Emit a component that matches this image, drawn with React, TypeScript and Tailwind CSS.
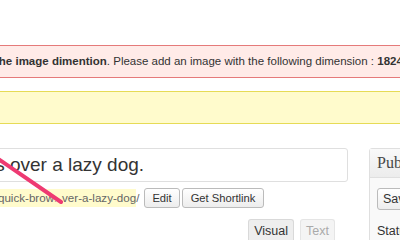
import React from "react";

export default function App() {
  return (
    <div className="relative w-[400px] h-[240px] overflow-hidden bg-white text-[#333] font-['Liberation_Sans',Arial,sans-serif]">
      <div className="pt-[45px]">
        {/* error notice */}
        <div className="-mx-[20px] h-[33px] border border-[#e57a7a] bg-[#ffebe8] flex items-center whitespace-nowrap text-[11.5px] text-[#333]">
          <span className="ml-[14px]">
            <b>the image dimention</b>. Please add an image with the following dimension : <b>1824 x 1200</b>
          </span>
        </div>

        {/* update notice */}
        <div className="-mx-[20px] mt-[13px] h-[33px] border border-[#e6db55] bg-[#fffbcc]" />

        <div className="mt-[24px] flex items-start">
          {/* post body column */}
          <div className="-ml-[20px] w-[368px] shrink-0">
            <div className="h-[34px] border border-[#dfdfdf] rounded-[3px] flex items-center overflow-hidden whitespace-nowrap">
              <span className="-ml-[27px] text-[19px] text-[#333]">jumps over a lazy dog.</span>
            </div>

            <div className="mt-[6px] h-[20px] flex items-center whitespace-nowrap text-[11.6px] text-[#666]">
              <span className="-ml-[2px] bg-[#fffbcc]">
                the-quick-brow<span className="text-[8px]">…</span>ver-a-lazy-dog
              </span>
              <span>/</span>
              <button className="ml-[5px] h-[20px] px-[7px] rounded-[3px] border border-[#bbb] bg-gradient-to-b from-white to-[#ededed] text-[#333] text-[11.2px]">
                Edit
              </button>
              <button className="ml-[2px] h-[20px] px-[8px] rounded-[3px] border border-[#bbb] bg-gradient-to-b from-white to-[#ededed] text-[#333] text-[11.2px]">
                Get Shortlink
              </button>
            </div>

            <div className="mt-[11px] mr-[13px] flex justify-end gap-[6px] text-[12.5px]">
              <div className="h-[24px] px-[5px] flex items-center rounded-t-[3px] border border-b-0 border-[#d9d9d9] bg-[#eeeeee] text-[#333]">
                Visual
              </div>
              <div className="h-[24px] px-[5px] flex items-center rounded-t-[3px] border border-b-0 border-[#e5e5e5] bg-[#f4f4f4] text-[#aaa]">
                Text
              </div>
            </div>
          </div>

          {/* publish box */}
          <div className="ml-[21px] w-[100px] shrink-0 border border-[#dfdfdf] rounded-[3px] bg-[#f9f9f9]">
            <div className="h-[29px] flex items-center pl-[7px] border-b border-[#dfdfdf] bg-gradient-to-b from-[#f9f9f9] to-[#ececec] text-[16px] text-[#464646] font-['Liberation_Serif',Georgia,serif]">
              Publish
            </div>
            <div className="px-[7px] pt-[8px] pb-[20px] whitespace-nowrap">
              <button className="h-[22px] px-[5px] rounded-[3px] border border-[#bbb] bg-gradient-to-b from-white to-[#ededed] text-[12.5px] text-[#333]">
                Save Draft
              </button>
              <div className="mt-[12px] text-[12.5px] text-[#333]">Status: Draft</div>
            </div>
          </div>
        </div>
      </div>

      {/* annotation arrow */}
      <svg className="absolute left-0 top-0 pointer-events-none" width="400" height="240" viewBox="0 0 400 240">
        <line x1="-6" y1="156" x2="61" y2="202" stroke="#ee3a72" strokeWidth="4" strokeLinecap="round" />
      </svg>
    </div>
  );
}
